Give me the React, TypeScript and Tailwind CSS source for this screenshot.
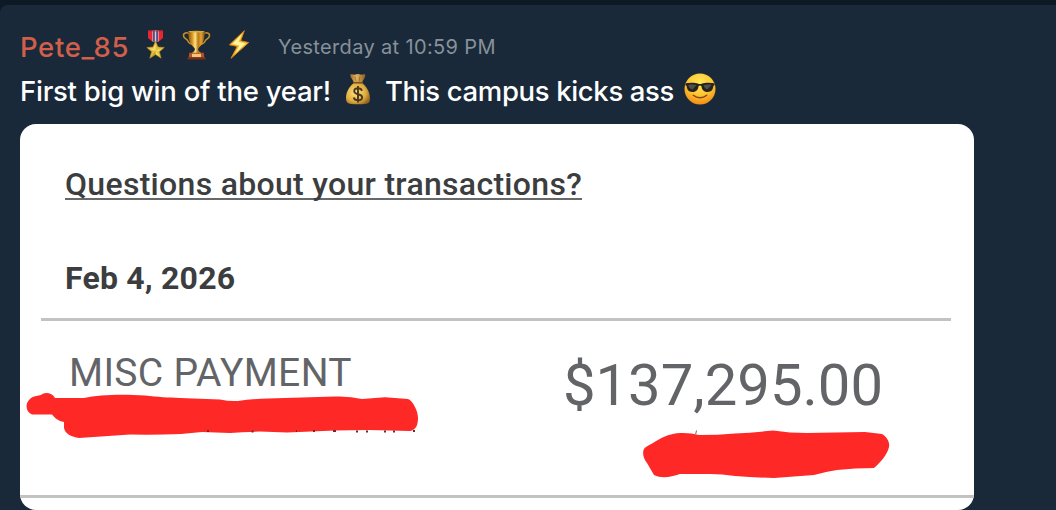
import React from "react";

function Medal() {
  return (
    <svg className="h-[30px] w-[20px] shrink-0" viewBox="0 0 20 30" aria-label="Medal">
      <path d="M2 .5h15v7.6l-4.2 3.4H6.200L2 8.100z" fill="#e8262f" />
      <path d="M6.500.5h6v11h-6z" fill="#dfe4ee" />
      <path d="M7.200.5h1.600v11H7.200zM10.200.5h1.600v11h-1.600z" fill="#22306c" />
      <path d="M8.800.5h1.400v11H8.800z" fill="#efc3cd" />
      <path d="M2 .5h15v.8H2z" fill="#a92430" />
      <path d="M9.500 11l2.500 6 6.300.5-4.900 4.200 1.700 6.500-5.600-3.700L3.800 28.200l1.800-6.500L.8 17.500l6.200-.5z" fill="#e5bf3a" stroke="#b98e20" strokeWidth=".6" strokeLinejoin="round" />
      <path d="M9.500 13.500v7.500l-2-3.300zM9.500 21l6.500-2.500-3.700 2.900zM9.500 21l4.200 5.300-4.200-2.500zM9.500 21l-6.300-2.500 4.300.1z" fill="#fff39b" opacity=".65" />
      <path d="M9.500 21v2.800l-4 2.700z" fill="#ae7d17" opacity=".6" />
    </svg>
  );
}

function Trophy() {
  return (
    <svg className="h-[30px] w-[30px] shrink-0" viewBox="0 0 30 30" aria-label="Trophy">
      <defs>
        <linearGradient id="cup">
          <stop stopColor="#8b540b" />
          <stop offset=".25" stopColor="#d99a22" />
          <stop offset=".42" stopColor="#ffe487" />
          <stop offset=".6" stopColor="#b87612" />
          <stop offset=".78" stopColor="#e2a534" />
          <stop offset="1" stopColor="#80500a" />
        </linearGradient>
      </defs>
      <g fill="none" stroke="#c78e2d" strokeWidth="1.500">
        <path d="M8 4.500C5 1.500 1.200 3 1.500 5.800 1.900 9 5 8.700 6 11.300c.7 2.200 3.500 3 5.300 2.700" />
        <path d="M21 4.500c3-3 6.800-1.500 6.500 1.300-.4 3.200-3.500 2.900-4.500 5.500-.7 2.200-3.500 3-5.300 2.700" />
      </g>
      <path d="M6.300 1.300h16.400c.2 7-1.500 13.200-5.700 16.100l-1 1.500.7 2.200 3.300 2.700H9l3.300-2.700.7-2.200-1-1.500C7.800 14.500 6.100 8.300 6.300 1.300z" fill="url(#cup)" />
      <ellipse cx="14.500" cy="1.600" rx="8.200" ry=".8" fill="#d9a83f" />
      <path d="M7.300 22.700h14.400l.7 5.500H6.600z" fill="#b45424" />
      <path d="M10 23.800h9v3.300h-9z" fill="#f4c479" />
      <path d="M6 27.300h17l1 2.100H5z" fill="#753015" />
    </svg>
  );
}

function Bolt() {
  return (
    <svg className="h-[30px] w-[22px] shrink-0" viewBox="0 0 22 30" aria-label="Lightning">
      <path d="M16.300.7L1.500 14.800l7.800 1.600L3 28.300l17.700-15.700-8-1.800z" fill="#fbc52c" stroke="#d9821c" strokeWidth="1" strokeLinejoin="round" />
      <path d="M13.700 4.200L4.300 13.900l7.200 1.500-4.200 7.900L17.700 13.400l-7.300-1.700z" fill="#fff3a6" />
    </svg>
  );
}

function MoneyBag() {
  return (
    <svg className="h-[32px] w-[26px] shrink-0" viewBox="0 0 26 32" aria-label="Money bag">
      <defs>
        <radialGradient id="bag" cx=".4" cy=".45" r=".65">
          <stop stopColor="#ffe27b" />
          <stop offset=".65" stopColor="#dfae3d" />
          <stop offset="1" stopColor="#956520" />
        </radialGradient>
        <linearGradient id="neck">
          <stop stopColor="#9a692a" />
          <stop offset=".4" stopColor="#e7b65e" />
          <stop offset="1" stopColor="#895a25" />
        </linearGradient>
      </defs>
      <path d="M8.700 10C4 14 .8 19.500 1 25.500c.1 4 2.200 5.300 5 5.500 4.500.4 9.500.4 14 0 3-.3 5-1.500 5-5.500C25 19.500 22 14 17.300 10z" fill="url(#bag)" />
      <path d="M5.300 1.500c2-1 3.500.6 5.200.1C12.300 1 13.500.8 15 1.600c2 .6 3-.8 5.200-.1.800 3-2.200 4.800-3 8.300H8.800c-.8-3.500-3.700-5-3.500-8.300z" fill="url(#neck)" />
      <path d="M8.700 9.800h8.600" stroke="#795020" strokeWidth="1.500" strokeLinecap="round" />
      <path d="M10 3.500l1.200 5M15 3.500l-1 5" stroke="#8d612b" strokeWidth=".7" />
      <path d="M17 17.700c-.5-1.500-2-2.400-4-2.400-2.300 0-3.800 1.200-3.800 2.900 0 4.100 8 1.900 8 6.100 0 1.900-1.700 3-4.100 3-2.300 0-4-1-4.400-2.800M13 13v16.500" fill="none" stroke="#493722" strokeWidth="1.900" />
    </svg>
  );
}

function Sunglasses() {
  return (
    <svg className="h-[32px] w-[32px] shrink-0" viewBox="0 0 32 32" aria-label="Smiling face with sunglasses">
      <defs>
        <radialGradient id="face" cx=".5" cy=".3" r=".7">
          <stop stopColor="#ffe85b" />
          <stop offset=".55" stopColor="#ffc832" />
          <stop offset="1" stopColor="#f28b18" />
        </radialGradient>
      </defs>
      <circle cx="16" cy="16" r="15.500" fill="url(#face)" />
      <path d="M1.500 10.200c4.500-.8 10-.7 12.700.5 1.200.4 2.400.4 3.600 0 2.700-1.200 8.200-1.300 12.700-.5l.1 2-1.200.6c-.5 4.200-2 6.200-5.700 6.200-4.300 0-5.800-2.400-6.300-6-.6-.8-2.200-.8-2.800 0-.5 3.600-2 6-6.300 6-3.700 0-5.200-2-5.700-6.200l-1.200-.6z" fill="#242320" />
      <path d="M4.300 11.800c3-.6 6-.5 8.200.3l-4 4.300c-2.500-.5-3.900-2-4.200-4.600zM19.500 12.100c2.200-.8 5.200-.9 8.200-.3l-4.200 4.500c-2.200-.5-3.500-1.900-4-4.200z" fill="#696761" opacity=".65" />
      <path d="M9.300 22.200c3.800 3.300 9.600 3.300 13.400 0" fill="none" stroke="#854814" strokeWidth="1.500" strokeLinecap="round" />
    </svg>
  );
}

function PayeeMark() {
  return (
    <svg className="h-[48px] w-[396px]" viewBox="25 391 396 48">
      <path d="M34 396.500L41 395C44 392 52 392 55 398L84 398C99 395 119 394 145 395.500C158 397 168 397.500 180 398L220 399.500Q229 401.500 238 401Q252 399 268 398.500L335 396.500Q350 396 362 399L385 397.200L408 399C413 401 418 411 418 418C418 425 416 430 410 431L369 430L335 430.500L287 432.500L260 431.500Q244 432 230 433L202 432L181 434Q155 435 130 434.500L79 438C72 437 65 434 64 428V422C58 421 55 418 52 414.500L32 414.500C24 411 25 400 34 396.500Z" fill="#fe2827" />
      <path d="M207 431h2M251.500 431.500h2M296 431h1M313 431h2M333 431h3M356 431.500h2M366 431.500h2M384 431.500h2M393 431.500h2M413 431h2" stroke="#72272b" strokeWidth="2" />
    </svg>
  );
}

function BalanceMark() {
  return (
    <svg className="h-[50px] w-[250px]" viewBox="641 430 250 50">
      <path d="M696.500 430.500l-.8 3.500" stroke="#666" strokeWidth="1" />
      <path d="M646 447C655 442 663 436 671 434.500C680 432 691 433 699 435Q718 435 735 433.500Q755 432.500 773 430.500Q790 433 807 433L865 432L882 434C887 437 890 442 889 447C887 455 881 462 874 468Q855 468 837 470Q824 472 814 475L774 478Q755 477.500 735 476Q722 474 710 474L680 474C671 477 662 479 654 475L647 463C642 457 642 449 646 447Z" fill="#fe2827" />
    </svg>
  );
}

function Receipt() {
  return (
    <section className="ml-5 h-[386px] w-[954px] overflow-hidden rounded-2xl bg-white font-['Roboto',sans-serif]">
      <div className="flex h-[194px] flex-col items-start pl-[45px] pt-[41px] text-[32px] leading-[38px] text-[#3b3d3f]">
        <h2 className="h-[34.500px] border-b-2 border-[#66686a] font-medium whitespace-nowrap">
          <span className="tracking-[0.300px]">Questions about your transactions?</span>
        </h2>
        <p className="mt-[59px] font-bold whitespace-nowrap"><span className="tracking-[0.200px]">Feb 4, 2026</span></p>
      </div>
      <div className="mr-[23px] ml-[21px] h-[3px] bg-[#c2c2c2]" />
      <div className="flex h-[174px] justify-between pr-[83px] pl-[5px] text-[#626467]">
        <div className="pt-[29px]">
          <div className="h-[41px] pl-[44px] text-[39px] leading-[46px] whitespace-nowrap"><span className="tracking-[0.350px]">MISC PAYMENT</span></div>
          <PayeeMark />
        </div>
        <div className="flex flex-col items-end pt-[29px]">
          <div className="h-[80px] pr-[8px] text-[58px] leading-[70px] whitespace-nowrap"><span className="tracking-[0px]">$137,295.00</span></div>
          <BalanceMark />
        </div>
      </div>
      <div className="h-[3px] bg-[#c2c2c2]" />
    </section>
  );
}

export default function App() {
  return (
    <main className="h-[510px] w-[1056px] overflow-hidden bg-[#0d1924] pt-[5px] font-['Inter',sans-serif]">
      <article className="h-[505px] rounded-tl-lg bg-[#192939]">
        <header className="flex h-[63px] pl-5 pt-[25px]">
          <div className="w-[126px] text-[27.500px] leading-[34px] font-medium whitespace-nowrap text-[#d15f4a]"><span className="tracking-[0.650px]">Pete_85</span></div>
          <div className="flex w-[132px] gap-[16px]">
            <Medal />
            <Trophy />
            <Bolt />
          </div>
          <time className="text-[20px] leading-[35px] whitespace-nowrap text-[#87919a]"><span className="tracking-[0.350px]">Yesterday at 10:59 PM</span></time>
        </header>
        <p className="flex h-[56px] pl-5 pt-[5px] text-[27.500px] leading-[36px] whitespace-nowrap text-white">
          <span className="w-[325px] font-[450]"><span className="tracking-[-0.250px]">First big win of the year!</span></span>
          <MoneyBag />
          <span className="ml-[14px] w-[299px] font-[450]"><span className="tracking-[-0.350px]">This campus kicks ass</span></span>
          <Sunglasses />
        </p>
        <Receipt />
      </article>
    </main>
  );
}
